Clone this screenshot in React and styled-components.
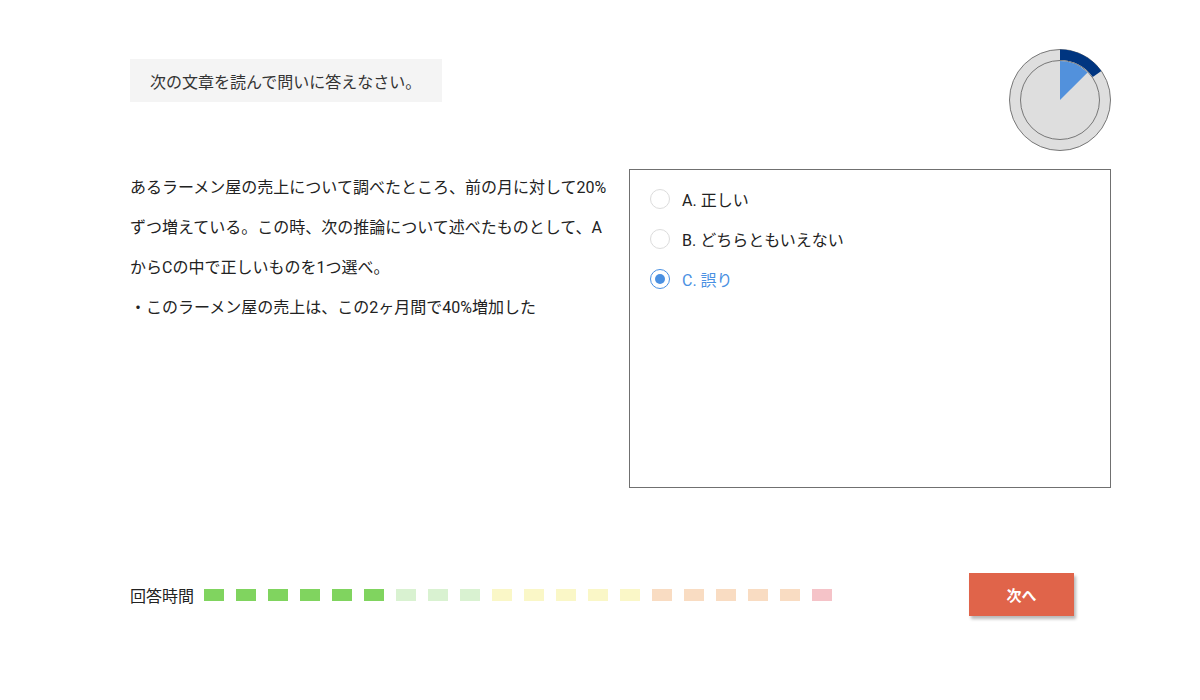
import React from "react";
import styled, { createGlobalStyle } from "styled-components";

const Global = createGlobalStyle`
  html, body { margin: 0; padding: 0; background: #fff; }
  body {
    font-family: Roboto, "Noto Sans CJK JP", "Noto Sans", sans-serif;
    color: #222;
  }
`;

const Page = styled.div`
  width: 1200px;
  height: 700px;
  box-sizing: border-box;
  padding: 48px 88px 0 130px;
  display: flex;
  flex-direction: column;
`;

const Header = styled.div`
  display: flex;
  justify-content: space-between;
  align-items: flex-start;
  height: 104px;
`;

const Instruction = styled.div`
  margin-top: 11px;
  height: 43px;
  padding: 0 21px 0 20px;
  background: #f4f4f4;
  display: flex;
  align-items: center;
  font-size: 16px;
  color: #333;
`;

const Main = styled.div`
  margin-top: 17px;
  display: flex;
  align-items: flex-start;
`;

const Question = styled.div`
  width: 499px;
  font-size: 16px;
  line-height: 40px;
  color: #222;
  margin-top: -1px;
`;

const Line = styled.div`
  white-space: nowrap;
`;

const Options = styled.div`
  width: 482px;
  height: 319px;
  box-sizing: border-box;
  border: 1px solid #707070;
  padding: 19px 20px;
  display: flex;
  flex-direction: column;
  gap: 20px;
`;

const Option = styled.label`
  display: flex;
  align-items: center;
  height: 20px;
  gap: 12px;
  font-size: 16px;
  color: ${(p) => (p.$checked ? "#4a90e2" : "#222")};
  cursor: pointer;
`;

const Radio = styled.span`
  width: 20px;
  height: 20px;
  box-sizing: border-box;
  border-radius: 50%;
  border: 1px solid ${(p) => (p.$checked ? "#4a90e2" : "#dcdcdc")};
  display: flex;
  align-items: center;
  justify-content: center;
  flex-shrink: 0;
  &::after {
    content: "";
    width: 10px;
    height: 10px;
    border-radius: 50%;
    background: #4a90e2;
    display: ${(p) => (p.$checked ? "block" : "none")};
  }
`;

const Footer = styled.div`
  margin-top: 85px;
  display: flex;
  justify-content: space-between;
  align-items: center;
`;

const TimeBar = styled.div`
  display: flex;
  align-items: center;
`;

const TimeLabel = styled.span`
  font-size: 16px;
  color: #222;
  margin-right: 10px;
`;

const Blocks = styled.div`
  display: flex;
  gap: 12px;
`;

const Block = styled.span`
  width: 20px;
  height: 12px;
  background: ${(p) => p.$color};
`;

const NextButton = styled.button`
  width: 105px;
  height: 43px;
  margin-right: 38px;
  border: none;
  background: #e0644a;
  color: #fff;
  font-family: Roboto, "Noto Sans CJK JP", sans-serif;
  font-size: 15px;
  font-weight: 700;
  box-shadow: 2px 3px 3px rgba(0, 0, 0, 0.28);
  cursor: pointer;
`;

const Timer = () => (
  <svg width="104" height="104" viewBox="0 0 104 104">
    <circle cx="52" cy="52" r="50.5" fill="#dedede" stroke="#777" strokeWidth="1" />
    <path d="M52 1.5 A50.5 50.5 0 0 1 93.37 23.03 L84.77 29.06 A40 40 0 0 0 52 12 Z" fill="#003580" />
    <circle cx="52" cy="52" r="39.5" fill="none" stroke="#777" strokeWidth="1" />
    <path d="M52 52 L52 13 A39 39 0 0 1 79.58 24.42 Z" fill="#5291dc" />
  </svg>
);

const colors = [
  ...Array(6).fill("#80d45f"),
  ...Array(3).fill("#d9f2d1"),
  ...Array(5).fill("#faf7c7"),
  ...Array(5).fill("#f9dcc2"),
  "#f5c3c8",
];

const options = [
  { key: "A", label: "A. 正しい" },
  { key: "B", label: "B. どちらともいえない" },
  { key: "C", label: "C. 誤り" },
];

export default function App() {
  const [selected, setSelected] = React.useState("C");
  return (
    <>
      <Global />
      <Page>
        <Header>
          <Instruction>次の文章を読んで問いに答えなさい。</Instruction>
          <Timer />
        </Header>
        <Main>
          <Question>
            <Line>あるラーメン屋の売上について調べたところ、前の月に対して20%</Line>
            <Line>ずつ増えている。この時、次の推論について述べたものとして、A</Line>
            <Line>からCの中で正しいものを1つ選べ。</Line>
            <Line>・このラーメン屋の売上は、この2ヶ月間で40%増加した</Line>
          </Question>
          <Options>
            {options.map((o) => (
              <Option
                key={o.key}
                $checked={selected === o.key}
                onClick={() => setSelected(o.key)}
              >
                <Radio $checked={selected === o.key} />
                {o.label}
              </Option>
            ))}
          </Options>
        </Main>
        <Footer>
          <TimeBar>
            <TimeLabel>回答時間</TimeLabel>
            <Blocks>
              {colors.map((c, i) => (
                <Block key={i} $color={c} />
              ))}
            </Blocks>
          </TimeBar>
          <NextButton>次へ</NextButton>
        </Footer>
      </Page>
    </>
  );
}
